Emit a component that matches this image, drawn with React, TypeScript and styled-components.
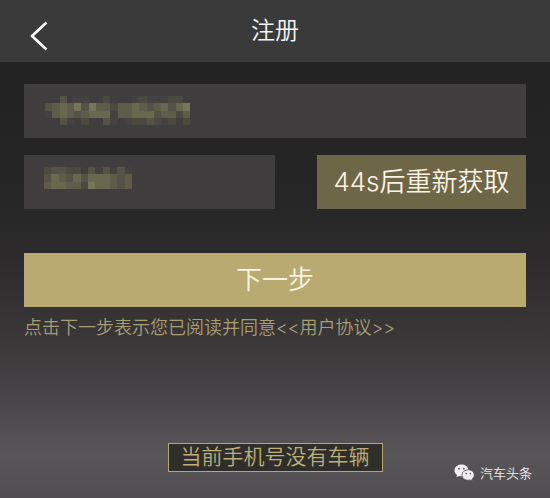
import React from "react";
import styled, { createGlobalStyle } from "styled-components";

const GlobalStyle = createGlobalStyle`
  * { box-sizing: border-box; }
  body {
    margin: 0;
    background: #222;
    font-family: Inter, "Noto Sans CJK SC", sans-serif;
    font-weight: 350;
  }
  button, input { font-family: inherit; }
`;

const Page = styled.div`
  min-height: 100vh;
  display: flex;
  flex-direction: column;
  background: linear-gradient(#222222 12%, #272626 40%, #2d2b2c 52%, #393738 68%, #454345 78%, #575557 91%, #504e50 100%);
`;

const Header = styled.header`
  display: grid;
  grid-template-columns: 78px 1fr 78px;
  align-items: center;
  height: 62px;
  background: #3a3a3a;
`;

const BackButton = styled.button`
  display: flex;
  align-items: center;
  height: 62px;
  padding: 9px 0 0 30px;
  border: 0;
  background: none;
  color: #fff;
`;

const Title = styled.h1`
  margin: 0;
  text-align: center;
  font-size: 24px;
  line-height: 32px;
  font-weight: 350;
  color: #f4f4f4;
`;

const Form = styled.form`
  flex: 1;
  display: flex;
  flex-direction: column;
  padding: 22px 24px 0;
`;

const CodeRow = styled.div`
  display: grid;
  grid-template-columns: 6fr 5fr;
  gap: 42px;
  margin: 17px 0 44px;
`;

const Field = styled.div`
  position: relative;
  height: 54px;
`;

const Input = styled.input`
  display: block;
  width: 100%;
  height: 54px;
  padding: 0 20px;
  border: 0;
  border-radius: 0;
  outline: 0;
  background: #3f3d3e;
  color: #85815c;
  font-size: 24px;
`;

const MaskLayer = styled.svg`
  position: absolute;
  left: 20px;
  top: 12px;
  pointer-events: none;
`;

const Button = styled.button<{ $tone: "muted" | "gold" }>`
  height: 54px;
  padding: 0;
  border: 0;
  border-radius: 0;
  background: ${(p) => (p.$tone === "gold" ? "#b8aa71" : "#6d6748")};
  color: #fdf3e4;
  font-size: 26px;
  line-height: 36px;
  font-weight: 350;
  white-space: nowrap;
`;

const Terms = styled.p`
  margin: 8px 0 0;
  font-size: 18px;
  line-height: 26px;
  color: #a79e74;
`;

const TermsLink = styled.a`
  color: inherit;
  text-decoration: none;
`;

const Footer = styled.footer`
  display: grid;
  grid-template-columns: 1fr auto 1fr;
  align-items: start;
  padding-bottom: 15px;
`;

const Notice = styled.div`
  grid-column: 2;
  height: 29px;
  padding: 0 12px;
  border: 1px solid #b5a86d;
  background: #302e2b;
  color: #bdaf75;
  font-size: 21px;
  line-height: 26px;
`;

const Account = styled.div`
  display: flex;
  align-items: center;
  justify-self: end;
  gap: 5px;
  margin: 20px 18px 0 0;
  color: #eeecee;
  font-size: 13px;
  line-height: 20px;
`;

const shades = ["", "#434240", "#4b4a41", "#555345", "#5f5c4a", "#6a674f", "#787459"];
const phoneMask = [
  "00301100200012111220",
  "34546364424454345356",
  "14543455514455534424",
  "00310200310122321202",
];
const codeMask = ["233220313131", "354353555434", "455442655434"];

function Mask({ rows }: { rows: string[] }) {
  const width = rows[0].length * 22;
  const height = rows.length * 22;
  return (
    <MaskLayer
      width={Math.round(width / 3)}
      height={Math.round(height / 3)}
      viewBox={`0 0 ${width} ${height}`}
      shapeRendering="crispEdges"
      aria-hidden="true"
    >
      {rows.flatMap((row, y) =>
        [...row].map((level, x) =>
          level === "0" ? null : (
            <rect key={`${x}-${y}`} x={x * 22} y={y * 22} width="22" height="22" fill={shades[Number(level)]} />
          )
        )
      )}
    </MaskLayer>
  );
}

function BackIcon() {
  return (
    <svg width="18" height="30" viewBox="0 0 18 30" fill="none" stroke="currentColor" strokeWidth="2.6" aria-hidden="true">
      <path d="M16.5 1.5 2 15l14.5 13.5" strokeLinejoin="round" />
    </svg>
  );
}

function ChatIcon() {
  return (
    <svg width="21" height="18" viewBox="0 0 21 18" aria-hidden="true">
      <path d="M7.5.5C3.5.5.5 3.1.5 6.4c0 1.9 1 3.5 2.6 4.6l-.6 2.2 2.6-1.3c.8.2 1.6.3 2.4.3 4 0 7-2.5 7-5.8S11.5.5 7.5.5Z" fill="#f0eef0" />
      <path d="M14.2 5.8c-3.5 0-6.2 2.3-6.2 5.2s2.7 5.200 6.200 5.200c.7 0 1.400-.1 2-.3l2.300 1.200-.6-2c1.500-1 2.400-2.400 2.400-4.100 0-2.900-2.700-5.200-6.100-5.200Z" fill="#f0eef0" stroke="#565456" strokeWidth=".8" />
      <g fill="#565456">
        <circle cx="5" cy="4.7" r=".9" />
        <circle cx="9.8" cy="4.7" r=".9" />
        <circle cx="12.2" cy="9.6" r=".8" />
        <circle cx="16.3" cy="9.6" r=".8" />
      </g>
    </svg>
  );
}

export default function App() {
  return (
    <>
      <GlobalStyle />
      <Page lang="zh-CN">
        <Header>
          <BackButton type="button" aria-label="返回">
            <BackIcon />
          </BackButton>
          <Title>注册</Title>
        </Header>
        <Form onSubmit={(e) => e.preventDefault()}>
          <Field>
            <Input type="tel" aria-label="手机号" />
            <Mask rows={phoneMask} />
          </Field>
          <CodeRow>
            <Field>
              <Input inputMode="numeric" aria-label="验证码" />
              <Mask rows={codeMask} />
            </Field>
            <Button type="button" $tone="muted">44s后重新获取</Button>
          </CodeRow>
          <Button type="submit" $tone="gold">下一步</Button>
          <Terms>
            点击下一步表示您已阅读并同意<TermsLink href="#terms">&lt;&lt;用户协议&gt;&gt;</TermsLink>
          </Terms>
        </Form>
        <Footer>
          <Notice role="status">当前手机号没有车辆</Notice>
          <Account>
            <ChatIcon />
            <span>汽车头条</span>
          </Account>
        </Footer>
      </Page>
    </>
  );
}
